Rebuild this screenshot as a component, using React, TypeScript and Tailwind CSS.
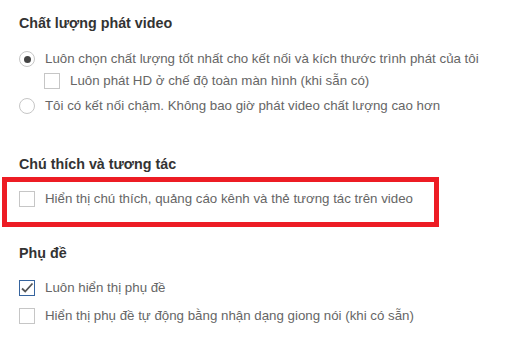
import React from 'react';

// Ô chọn và nút radio vẽ bằng CSS cho giống giao diện cũ
function Checkbox({ checked = false }: { checked?: boolean }) {
  return (
    <span
      className={
        'flex h-[16px] w-[16px] shrink-0 items-center justify-center border bg-white ' +
        (checked ? 'border-[#36649e]' : 'border-[#c6c6c6]')
      }
    >
      {checked && (
        <svg width="14" height="14" viewBox="0 0 14 14" fill="none">
          <path d="M2 7.5 L5.2 10.5 L12.5 2.5" stroke="#555" strokeWidth="1.8" />
        </svg>
      )}
    </span>
  );
}

function Radio({ checked = false }: { checked?: boolean }) {
  return (
    <span className="flex h-[16px] w-[16px] shrink-0 items-center justify-center rounded-full border border-[#c6c6c6] bg-white">
      {checked && <span className="h-[7px] w-[7px] rounded-full bg-[#444]" />}
    </span>
  );
}

function Row({ children, control, className = '' }: { children: React.ReactNode; control: React.ReactNode; className?: string }) {
  return (
    <div className={'flex h-[22px] items-center gap-[10px] ' + className}>
      {control}
      <span className="whitespace-nowrap">{children}</span>
    </div>
  );
}

function Heading({ children, className = '' }: { children: React.ReactNode; className?: string }) {
  return <h2 className={'text-[14.3px] font-bold leading-[20px] text-[#333] ' + className}>{children}</h2>;
}

export default function App() {
  return (
    <div className="h-[343px] w-[511px] overflow-hidden bg-white pt-[13px] font-['Liberation_Sans',Arial,sans-serif] text-[13.3px] text-[#666]">
      {/* Chất lượng phát video */}
      <div className="pl-[19px]">
        <Heading>Chất lượng phát video</Heading>
        <Row className="mt-[15px]" control={<Radio checked />}>
          Luôn chọn chất lượng tốt nhất cho kết nối và kích thước trình phát của tôi
        </Row>
        <Row className="pl-[25px]" control={<Checkbox />}>
          Luôn phát HD ở chế độ toàn màn hình (khi sẵn có)
        </Row>
        <Row className="mt-[3px]" control={<Radio />}>
          Tôi có kết nối chậm. Không bao giờ phát video chất lượng cao hơn
        </Row>
      </div>

      {/* Chú thích và tương tác */}
      <Heading className="mt-[37px] pl-[19px]">Chú thích và tương tác</Heading>
      <div className="ml-[2px] mt-[3px] h-[50px] w-[437px] border-[5px] border-[#ed1c24] pl-[12px] pt-[6px]">
        <Row control={<Checkbox />}>Hiển thị chú thích, quảng cáo kênh và thẻ tương tác trên video</Row>
      </div>

      {/* Phụ đề */}
      <div className="pl-[19px]">
        <Heading className="mt-[16px]">Phụ đề</Heading>
        <Row className="mt-[14px]" control={<Checkbox checked />}>
          Luôn hiển thị phụ đề
        </Row>
        <Row className="mt-[6px]" control={<Checkbox />}>
          Hiển thị phụ đề tự động bằng nhận dạng giong nói (khi có sẵn)
        </Row>
      </div>
    </div>
  );
}
